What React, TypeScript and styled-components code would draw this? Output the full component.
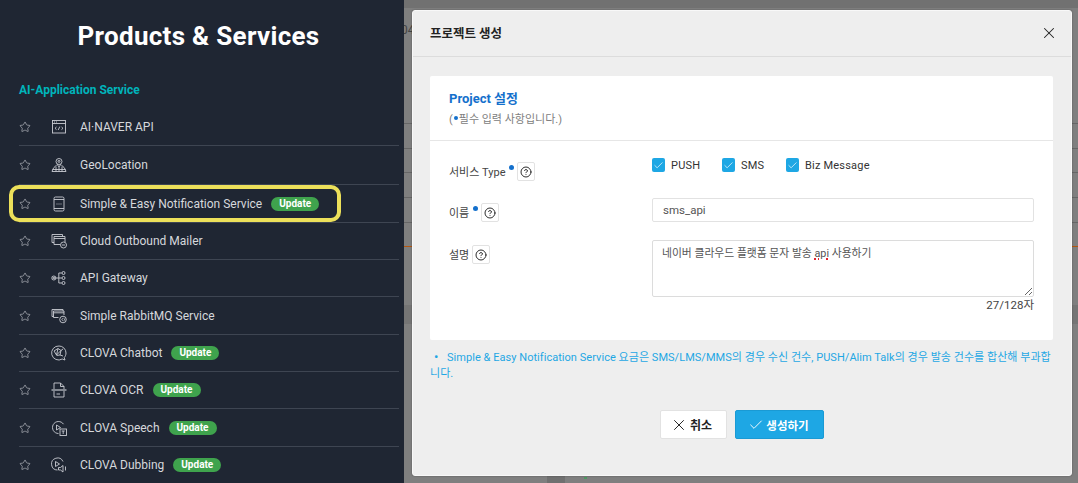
import React from "react";
import styled, { createGlobalStyle } from "styled-components";
import { Check, CircleHelp, Star, X } from "lucide-react";

const FONT = `Roboto, "Noto Sans CJK KR", sans-serif`;

const GlobalStyles = createGlobalStyle`
  html, body {
    margin: 0;
    background: #7f7f7f;
  }
`;

const IconSvg = (props: { children: React.ReactNode }) => (
  <svg
    width="16"
    height="16"
    viewBox="0 0 16 16"
    fill="none"
    stroke="#c9ccd2"
    strokeWidth="0.9"
  >
    {props.children}
  </svg>
);

const icons = {
  api: (
    <IconSvg>
      <rect x="1.5" y="1.5" width="13" height="12.5" />
      <path d="M1.5 4.5h13M3 3h1M5 3h1" />
      <path d="M5.5 8l-1.5 1.3 1.5 1.3M10.5 8l1.5 1.3-1.5 1.3M8.8 7.6l-1.6 3.4" />
    </IconSvg>
  ),
  geo: (
    <IconSvg>
      <circle cx="8" cy="4.5" r="3" />
      <circle cx="8" cy="4.4" r="1" />
      <path d="M6 7l2 3 2-3" />
      <path d="M1 14.5c1-3.5 3-5.5 4.5-6M15 14.5c-1-3.5-3-5.5-4.5-6M1.5 12.500h13M5 14.500V9.500M8 14.500V10M11 14.500V9.500M1 14.500h14" />
    </IconSvg>
  ),
  phone: (
    <IconSvg>
      <rect x="3" y="1" width="10" height="14" rx="1.5" />
      <path d="M3 3.500h10M3 12.500h10" />
      <path d="M5.500 8h1M7.500 8h1M9.500 8h1" />
    </IconSvg>
  ),
  mailer: (
    <IconSvg>
      <path d="M3 9.500H1V1.500h10.500v2" />
      <path d="M3 3.500h11v5.500M3 3.500v8h6" />
      <path d="M3 5.500h11" />
      <circle cx="12.500" cy="12" r="3" />
      <path d="M11 12h3" />
    </IconSvg>
  ),
  gateway: (
    <IconSvg>
      <circle cx="2.800" cy="8" r="2" />
      <path d="M1.500 6.700l2.600 2.600M4.100 6.700l-2.600 2.600M4.800 8h3M7.800 3v10M7.800 3h3M7.800 8h3M7.800 13h3" />
      <circle cx="12.500" cy="3" r="1.500" />
      <circle cx="12.500" cy="8" r="1.500" />
      <circle cx="12.500" cy="13" r="1.500" />
    </IconSvg>
  ),
  rabbit: (
    <IconSvg>
      <path d="M2.500 8.500H1V1.500h11v1.500" />
      <path d="M2.500 3h10.500v4M2.500 3v6.500h5M2.500 4.800h10.500" />
      <circle cx="12" cy="11.500" r="3.300" />
      <path d="M12.500 9.800l-1.600 1.700 1.600 1.700M13.700 10.500v2" />
    </IconSvg>
  ),
  chatbot: (
    <IconSvg>
      <path d="M8 1a7 7 0 0 1 7 7c0 1.800-.7 3.400-1.800 4.600l.8 2.400-2.800-1A7 7 0 1 1 8 1z" />
      <path d="M3 6l4-2.500 3 2L5.500 10zM7 3.500L5.500 10M10 5.500l-1 4.500-3.500.5M12 4l-2 1.500M9 10l3 1" />
    </IconSvg>
  ),
  ocr: (
    <IconSvg>
      <path d="M3 7V1h6.500L13 4.500V7M9.500 1v3.500H13" />
      <path d="M0.500 8h15" strokeWidth="1.200" />
      <path d="M3 9v6h10V9M5.500 12h3.500" />
    </IconSvg>
  ),
  speech: (
    <IconSvg>
      <path d="M7.500 13.500a6 6 0 1 1 5-9.300" />
      <path d="M5.500 5v5l4-2.500z" />
      <rect x="9" y="9" width="6.500" height="6.500" />
      <path d="M10.700 11h3M12.200 11v3" />
    </IconSvg>
  ),
  dubbing: (
    <IconSvg>
      <path d="M6.500 13a6 6 0 1 1 5.500-8.500" />
      <path d="M4.500 4.500v5l4-2.500z" />
      <path d="M7.500 10.500h2l2.500-2v6.500l-2.500-2h-2zM14.500 9.500v4" />
    </IconSvg>
  )
};

const services = [
  { name: "AI·NAVER API", icon: icons.api, height: 38 },
  { name: "GeoLocation", icon: icons.geo, height: 39 },
  {
    name: "Simple & Easy Notification Service",
    icon: icons.phone,
    height: 38,
    update: true,
    highlighted: true
  },
  { name: "Cloud Outbound Mailer", icon: icons.mailer, height: 37 },
  { name: "API Gateway", icon: icons.gateway, height: 37 },
  { name: "Simple RabbitMQ Service", icon: icons.rabbit, height: 38 },
  { name: "CLOVA Chatbot", icon: icons.chatbot, height: 37, update: true },
  { name: "CLOVA OCR", icon: icons.ocr, height: 37, update: true },
  { name: "CLOVA Speech", icon: icons.speech, height: 38, update: true },
  { name: "CLOVA Dubbing", icon: icons.dubbing, height: 37, update: true }
];

const HelpButton = () => (
  <HelpBox>
    <CircleHelp size={12} color="#222" strokeWidth={1.9} />
  </HelpBox>
);

const App = () => (
  <>
    <GlobalStyles />
    <Screen>
      <Sidebar>
        <SidebarTitle>Products &amp; Services</SidebarTitle>
        <SectionTitle>AI-Application Service</SectionTitle>
        <ServiceList>
          {services.map(service => (
            <ServiceRow key={service.name} $height={service.height}>
              <Star size={12} color="#b4b8bf" strokeWidth={1.4} />
              <ServiceIcon>{service.icon}</ServiceIcon>
              <ServiceName>{service.name}</ServiceName>
              {service.update && <UpdateBadge>Update</UpdateBadge>}
              {service.highlighted && <Highlight />}
            </ServiceRow>
          ))}
        </ServiceList>
      </Sidebar>

      <BackPage>
        <BackTop />
        <BackDate>04</BackDate>
        <BackLine $height={101} />
        <BackLine $height={25} />
        <BackLine $height={24} />
        <BackLine $height={25} />
        <BackLine $height={25} />
        <BackLine $height={24} $accent />
        <BackGap />
        <BackBand />
        <BackFooter>
          <BackPatch />
          <BackDot />
        </BackFooter>
      </BackPage>

      <Modal>
        <ModalHeader>
          <ModalTitle>프로젝트 생성</ModalTitle>
          <X size={18} color="#222" strokeWidth={1.4} />
        </ModalHeader>
        <ModalBody>
          <Card>
            <CardHead>
              <CardTitle>Project 설정</CardTitle>
              <CardHint>
                (<RequiredDot $inline />필수 입력 사항입니다.)
              </CardHint>
            </CardHead>
            <Form>
              <FormRow $top={17}>
                <FormLabel $offset={4}>
                  <LabelText>서비스 Type</LabelText>
                  <RequiredDot />
                  <HelpButton />
                </FormLabel>
                <CheckGroup>
                  <CheckItem $width={70}>
                    <CheckBox>
                      <Check size={11} color="#fff" strokeWidth={1.5} />
                    </CheckBox>
                    PUSH
                  </CheckItem>
                  <CheckItem $width={64}>
                    <CheckBox>
                      <Check size={11} color="#fff" strokeWidth={1.5} />
                    </CheckBox>
                    SMS
                  </CheckItem>
                  <CheckItem>
                    <CheckBox>
                      <Check size={11} color="#fff" strokeWidth={1.5} />
                    </CheckBox>
                    Biz Message
                  </CheckItem>
                </CheckGroup>
              </FormRow>
              <FormRow $top={17}>
                <FormLabel $offset={5}>
                  <LabelText>이름</LabelText>
                  <RequiredDot />
                  <HelpButton />
                </FormLabel>
                <NameInput>sms_api</NameInput>
              </FormRow>
              <FormRow $top={18}>
                <FormLabel $offset={5}>
                  <LabelText>설명</LabelText>
                  <HelpButton />
                </FormLabel>
                <div>
                  <DescriptionBox>
                    네이버 클라우드 플랫폼 문자 발송 <Misspelled>api</Misspelled> 사용하기
                  </DescriptionBox>
                  <Counter>27/128자</Counter>
                </div>
              </FormRow>
            </Form>
          </Card>
          <Notice>
            <NoticeBullet>•</NoticeBullet>Simple &amp; Easy Notification Service 요금은
            SMS/LMS/MMS의 경우 수신 건수, PUSH/Alim Talk의 경우 발송 건수를 합산해 부과합니다.
          </Notice>
          <Buttons>
            <CancelButton>
              <X size={18} color="#222" strokeWidth={1.3} />
              취소
            </CancelButton>
            <CreateButton>
              <Check size={16} color="#fff" strokeWidth={1.4} />
              생성하기
            </CreateButton>
          </Buttons>
        </ModalBody>
      </Modal>
    </Screen>
  </>
);
export default App;

const Screen = styled.div`
  position: relative;
  display: flex;
  width: 1078px;
  height: 483px;
  overflow: hidden;
  font-family: ${FONT};
`;

const Sidebar = styled.aside`
  position: relative;
  z-index: 1;
  box-sizing: border-box;
  flex: 0 0 404px;
  padding: 0 5px 0 19px;
  background: #1f2633;
`;

const SidebarTitle = styled.h1`
  margin: 0 0 0 -19px;
  width: 397px;
  height: 72px;
  line-height: 72px;
  text-align: center;
  font-size: 26px;
  font-weight: 700;
  letter-spacing: 0.3px;
  color: #fff;
`;

const SectionTitle = styled.h2`
  margin: 0;
  height: 36px;
  line-height: 36px;
  font-size: 12px;
  font-weight: 700;
  color: #00b4bb;
`;

const ServiceList = styled.ul`
  margin: 0;
  padding: 0;
  list-style: none;
`;

const ServiceRow = styled.li<{ $height: number }>`
  position: relative;
  box-sizing: border-box;
  display: flex;
  align-items: center;
  height: ${props => props.$height}px;
  border-bottom: 1px solid #3e4552;
  &:last-child {
    border-bottom-color: transparent;
  }
`;

const ServiceIcon = styled.span`
  display: flex;
  margin: 0 13px 0 20px;
`;

const ServiceName = styled.span`
  font-size: 12px;
  color: #d6d8dc;
`;

const UpdateBadge = styled.span`
  margin-left: 9px;
  width: 48px;
  height: 14px;
  line-height: 14px;
  border-radius: 7px;
  text-align: center;
  font-size: 10px;
  font-weight: 700;
  color: #fff;
  background: #3fa34d;
`;

const Highlight = styled.span`
  position: absolute;
  left: -10px;
  top: 0;
  box-sizing: border-box;
  width: 332px;
  height: 37px;
  border: 4px solid #ece05a;
  border-radius: 10px;
`;

const BackPage = styled.div`
  flex: 1;
  display: flex;
  flex-direction: column;
  min-width: 0;
  background: #7f7f7f;
`;

const BackTop = styled.div`
  height: 8px;
  background: #717171;
`;

const BackDate = styled.div`
  height: 0;
  margin-left: -3px;
  padding-top: 15px;
  font-size: 12px;
  line-height: 14px;
  color: #444;
`;

const BackLine = styled.div<{ $height: number; $accent?: boolean }>`
  flex: 0 0 ${props => props.$height}px;
  box-sizing: border-box;
  border-bottom: 1px solid ${props => (props.$accent ? "#b4560f" : "#666")};
`;

const BackGap = styled.div`
  height: 58px;
`;

const BackBand = styled.div`
  height: 19px;
  background: #757575;
`;

const BackFooter = styled.div`
  flex: 1;
  display: flex;
  align-items: flex-end;
  padding-left: 143px;
`;

const BackPatch = styled.div`
  width: 18px;
  height: 7px;
  background: #707070;
`;

const BackDot = styled.div`
  width: 3px;
  height: 2px;
  margin: 0 0 4px 19px;
  background: #4f9a63;
`;

const Modal = styled.section`
  position: absolute;
  z-index: 2;
  left: 412px;
  top: 10px;
  box-sizing: border-box;
  display: flex;
  flex-direction: column;
  width: 660px;
  height: 466px;
  background: #eee;
  border: 1px solid #f8f8f8;
  border-radius: 3px;
  box-shadow: 0 0 2px rgba(0, 0, 0, 0.35);
`;

const ModalHeader = styled.header`
  box-sizing: border-box;
  display: flex;
  align-items: center;
  justify-content: space-between;
  height: 46px;
  padding: 0 13px 2px 17px;
  border-bottom: 1px solid #dcdcdc;
`;

const ModalTitle = styled.h2`
  margin: 0;
  font-size: 12.5px;
  font-weight: 700;
  color: #222;
`;

const ModalBody = styled.div`
  padding: 19px 18px 0 17px;
`;

const Card = styled.div`
  box-sizing: border-box;
  height: 264px;
  background: #fff;
  border-radius: 2px;
`;

const CardHead = styled.div`
  box-sizing: border-box;
  height: 65px;
  padding: 14px 19px 0;
  border-bottom: 1px solid #e6e6e6;
`;

const CardTitle = styled.h3`
  margin: 0;
  height: 17px;
  line-height: 17px;
  font-size: 13px;
  font-weight: 700;
  color: #1470cc;
`;

const CardHint = styled.p`
  margin: 5px 0 0;
  font-size: 11px;
  line-height: 15px;
  color: #808080;
`;

const Form = styled.div`
  padding: 0 19px;
`;

const FormRow = styled.div<{ $top: number }>`
  display: grid;
  grid-template-columns: 203px 382px;
  margin-top: ${props => props.$top}px;
`;

const FormLabel = styled.div<{ $offset: number }>`
  display: flex;
  align-items: center;
  align-self: start;
  padding-top: ${props => props.$offset}px;
  font-size: 11px;
  color: #444;
`;

const LabelText = styled.span`
  margin-bottom: 2px;
`;

const RequiredDot = styled.span<{ $inline?: boolean }>`
  display: inline-block;
  width: ${props => (props.$inline ? 4 : 5)}px;
  height: ${props => (props.$inline ? 4 : 5)}px;
  border-radius: 50%;
  background: #1470cc;
  margin: ${props => (props.$inline ? "0 1px 3px 1px" : "0 0 9px 4px")};
`;

const HelpBox = styled.span`
  box-sizing: border-box;
  display: flex;
  align-items: center;
  justify-content: center;
  width: 18px;
  height: 19px;
  margin-left: 3px;
  background: #fff;
  border: 1px solid #e2e2e2;
  border-radius: 2px;
`;

const CheckGroup = styled.div`
  display: flex;
  align-items: flex-start;
`;

const CheckItem = styled.label<{ $width?: number }>`
  display: flex;
  align-items: center;
  width: ${props => (props.$width ? `${props.$width}px` : "auto")};
  height: 14px;
  font-size: 11px;
  letter-spacing: 0.2px;
  color: #333;
`;

const CheckBox = styled.span`
  display: flex;
  align-items: center;
  justify-content: center;
  width: 13px;
  height: 14px;
  margin-right: 6px;
  border-radius: 2px;
  background: #1ea7e4;
`;

const NameInput = styled.div`
  box-sizing: border-box;
  height: 24px;
  padding: 0 10px;
  line-height: 23px;
  font-size: 11.5px;
  color: #555;
  background: #fff;
  border: 1px solid #e2e2e2;
  border-radius: 2px;
`;

const DescriptionBox = styled.div`
  box-sizing: border-box;
  width: 382px;
  height: 57px;
  padding: 5px 9px;
  font-size: 10.8px;
  line-height: 15px;
  color: #555;
  background: #fff;
  border: 1px solid #dcdcdc;
  border-radius: 2px;
  overflow: auto;
  resize: both;
`;

const Misspelled = styled.span`
  text-decoration: underline dotted #e0242e 1.5px;
  text-underline-offset: 1px;
`;

const Counter = styled.div`
  margin-top: 1px;
  text-align: right;
  font-size: 11.5px;
  line-height: 15px;
  color: #444;
`;

const Notice = styled.p`
  margin: 10px 0 0;
  font-size: 11px;
  line-height: 16px;
  letter-spacing: 0.04px;
  color: #1ea7e4;
`;

const NoticeBullet = styled.span`
  display: inline-block;
  width: 17px;
  padding-left: 4px;
  box-sizing: border-box;
  font-size: 13px;
  line-height: 1;
`;

const Buttons = styled.div`
  display: flex;
  justify-content: center;
  gap: 8px;
  margin-top: 28px;
`;

const ActionButton = styled.button`
  box-sizing: border-box;
  display: flex;
  align-items: center;
  justify-content: center;
  gap: 2px;
  height: 29px;
  padding: 0;
  font-family: ${FONT};
  font-size: 12px;
  font-weight: 700;
  border-radius: 2px;
`;

const CancelButton = styled(ActionButton)`
  width: 67px;
  color: #222;
  background: #fff;
  border: 1px solid #e2e2e2;

  svg {
    margin-left: -4px;
  }
`;

const CreateButton = styled(ActionButton)`
  width: 89px;
  font-size: 11.5px;
  color: #fff;
  background: #1ea7e4;
  border: 1px solid #1a9ad4;

  svg {
    margin-left: -1px;
  }
`;
